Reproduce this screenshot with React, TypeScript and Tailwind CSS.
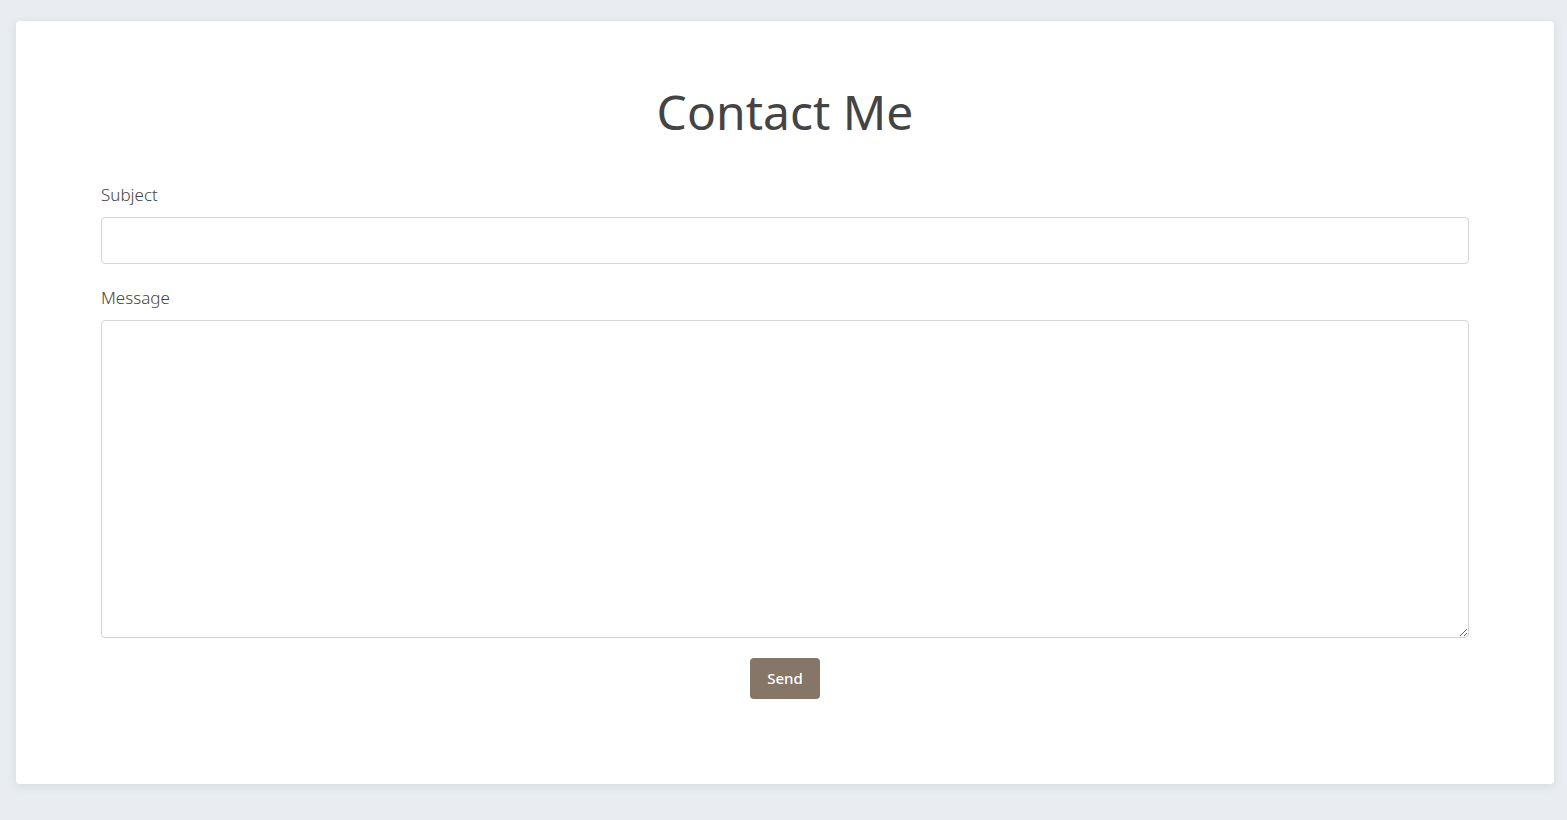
import React from "react";

const App: React.FC = () => {
  return (
    <div className="min-h-[820px] bg-[#e9edf1] pl-4 pr-[13px] pt-[21px] pb-9 font-['Noto_Sans',sans-serif]">
      <div className="bg-white rounded shadow-[0_2px_10px_rgba(60,70,90,0.12)] px-[85px] pt-[62px] pb-[85px]">
        <h1 className="text-center text-[48px] leading-[58px] font-normal text-[#444444]">Contact Me</h1>
        <form className="mt-[42px] flex flex-col" onSubmit={(e) => e.preventDefault()}>
          <label className="text-[17px] leading-6 font-light text-[#444444]">Subject</label>
          <input
            type="text"
            className="mt-[10px] h-[47px] w-full rounded border border-[#d4d4d4] px-3 outline-none"
          />
          <label className="mt-[22px] text-[17px] leading-6 font-light text-[#444444]">Message</label>
          <textarea className="mt-[10px] h-[318px] w-full rounded border border-[#d4d4d4] px-3 py-2 outline-none" />
          <div className="mt-5 flex justify-center">
            <button
              type="submit"
              className="h-[41px] w-[70px] rounded bg-[#857668] text-[15px] font-medium text-white"
            >
              Send
            </button>
          </div>
        </form>
      </div>
    </div>
  );
};

export default App;
